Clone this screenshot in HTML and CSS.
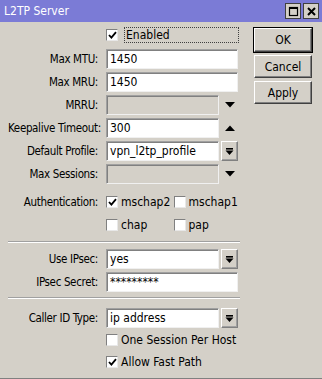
FILE: index.html
```html
<!doctype html>
<html lang="en">
<head>
  <meta charset="UTF-8">
  <title>L2TP Server</title>
  <link rel="stylesheet" href="styles.css">
</head>
<body>
  <div class="window">
    <div class="titlebar">
      <span class="title">L2TP Server</span>
      <div class="tb-buttons">
        <span class="tb-btn"><svg width="11" height="11" viewBox="0 0 11 11"><rect x="1.5" y="1.5" width="8" height="8" fill="none" stroke="#000" stroke-width="1.2"/><line x1="1" y1="2" x2="10" y2="2" stroke="#000" stroke-width="2"/></svg></span>
        <span class="tb-btn"><svg width="11" height="11" viewBox="0 0 11 11"><path d="M2 2 L9 9 M9 2 L2 9" stroke="#000" stroke-width="2"/></svg></span>
      </div>
    </div>

    <div class="content">
      <div class="form">
        <div class="row row-enabled">
          <span class="label"></span>
          <div class="field">
            <span class="check on"><svg width="9" height="9" viewBox="0 0 9 9"><path d="M1 4 L3.4 6.6 L8 1.2" fill="none" stroke="#000" stroke-width="1.8"/></svg></span>
            <span class="focus">Enabled</span>
          </div>
        </div>

        <div class="row">
          <span class="label">Max MTU:</span>
          <div class="field"><span class="input">1450</span></div>
        </div>
        <div class="row">
          <span class="label">Max MRU:</span>
          <div class="field"><span class="input">1450</span></div>
        </div>
        <div class="row">
          <span class="label">MRRU:</span>
          <div class="field">
            <span class="input short disabled"></span>
            <span class="arrow"><svg width="10" height="6" viewBox="0 0 10 6"><polygon points="0,0 10,0 5,5.5" fill="#000"/></svg></span>
          </div>
        </div>
        <div class="row">
          <span class="label">Keepalive Timeout:</span>
          <div class="field">
            <span class="input short">300</span>
            <span class="arrow"><svg width="10" height="6" viewBox="0 0 10 6"><polygon points="0,6 10,6 5,0.5" fill="#000"/></svg></span>
          </div>
        </div>
        <div class="row">
          <span class="label">Default Profile:</span>
          <div class="field">
            <span class="input short">vpn_l2tp_profile</span>
            <span class="drop"><svg width="9" height="9" viewBox="0 0 9 9"><rect x="1" y="1" width="7" height="1.6" fill="#000"/><polygon points="0.5,3.5 8.5,3.5 4.5,8" fill="#000"/></svg></span>
          </div>
        </div>
        <div class="row">
          <span class="label">Max Sessions:</span>
          <div class="field">
            <span class="input short disabled"></span>
            <span class="arrow"><svg width="10" height="6" viewBox="0 0 10 6"><polygon points="0,0 10,0 5,5.5" fill="#000"/></svg></span>
          </div>
        </div>

        <div class="row row-auth">
          <span class="label">Authentication:</span>
          <div class="field checks">
            <span class="opt"><span class="check on"><svg width="9" height="9" viewBox="0 0 9 9"><path d="M1 4 L3.4 6.6 L8 1.2" fill="none" stroke="#000" stroke-width="1.8"/></svg></span>mschap2</span>
            <span class="opt"><span class="check"></span>mschap1</span>
          </div>
        </div>
        <div class="row">
          <span class="label"></span>
          <div class="field checks">
            <span class="opt"><span class="check"></span>chap</span>
            <span class="opt"><span class="check"></span>pap</span>
          </div>
        </div>

        <div class="sep"></div>

        <div class="row">
          <span class="label">Use IPsec:</span>
          <div class="field">
            <span class="input short">yes</span>
            <span class="drop"><svg width="9" height="9" viewBox="0 0 9 9"><rect x="1" y="1" width="7" height="1.6" fill="#000"/><polygon points="0.5,3.5 8.5,3.5 4.5,8" fill="#000"/></svg></span>
          </div>
        </div>
        <div class="row">
          <span class="label">IPsec Secret:</span>
          <div class="field"><span class="input">*********</span></div>
        </div>

        <div class="sep sep-2"></div>

        <div class="row row-caller">
          <span class="label">Caller ID Type:</span>
          <div class="field">
            <span class="input short">ip address</span>
            <span class="drop"><svg width="9" height="9" viewBox="0 0 9 9"><rect x="1" y="1" width="7" height="1.6" fill="#000"/><polygon points="0.5,3.5 8.5,3.5 4.5,8" fill="#000"/></svg></span>
          </div>
        </div>
        <div class="row row-tight">
          <span class="label"></span>
          <div class="field"><span class="opt"><span class="check"></span>One Session Per Host</span></div>
        </div>
        <div class="row row-tight">
          <span class="label"></span>
          <div class="field"><span class="opt"><span class="check on"><svg width="9" height="9" viewBox="0 0 9 9"><path d="M1 4 L3.4 6.6 L8 1.2" fill="none" stroke="#000" stroke-width="1.8"/></svg></span>Allow Fast Path</span></div>
        </div>
      </div>

      <div class="actions">
        <button class="btn default">OK</button>
        <button class="btn">Cancel</button>
        <button class="btn">Apply</button>
      </div>
    </div>
  </div>
</body>
</html>
```

FILE: styles.css
```css
*{margin:0;
  padding:0;
  box-sizing:border-box;}
body{background:#d4d0c8;
     font-family:"DejaVu Sans Condensed","DejaVu Sans","Liberation Sans",sans-serif;
     font-size:11px;
     color:#000;}
.window{width:322px;
        height:379px;
        background:#d4d0c8;
        border-bottom:1px solid #808080;}
.titlebar{height:22px;
          background:#7b7bd6;
          display:flex;
          align-items:center;
          justify-content:space-between;
          padding:0 3px 0 4px;}
.title{color:#fff;
       font-size:12px;}
.tb-buttons{display:flex;
            gap:2px;}
.tb-btn{width:16px;
        height:16px;
        background:#d4d0c8;
        border:1px solid #404040;
        display:flex;
        align-items:center;
        justify-content:center;}

.content{display:flex;
         padding:5px 0 0 8px;}
.form{width:234px;
      display:flex;
      flex-direction:column;
      gap:3px;}
.row{display:flex;
     align-items:center;
     height:20px;
     gap:8px;}
.label{width:90px;
       text-align:right;
       white-space:nowrap;
       font-size:11.5px;
       letter-spacing:-0.35px;}
.field{display:flex;
       align-items:center;
       gap:2px;
       width:133px;}

.row-enabled{height:16px;
             margin-bottom:3px;}
.focus{border:1px dotted #404040;
       width:120px;
       height:16px;
       line-height:14px;
       padding-left:1px;
       margin-left:1px;
       font-size:12px;}

.input{display:block;
       width:132px;
       height:20px;
       line-height:18px;
       padding-left:3px;
       background:#fff;
       border:1px solid;
       border-color:#a0a0a0 #f0f0f0 #f0f0f0 #a0a0a0;
       box-shadow:inset 1px 1px 0 #808080;
       font-size:12px;
       white-space:nowrap;}
.input.short{width:113px;}
.input.disabled{background:#d4d0c8;}
.arrow{width:17px;
       display:flex;
       justify-content:center;}
.drop{width:17px;
      height:20px;
      border:1px solid;
      border-color:#fff #808080 #808080 #fff;
      box-shadow:inset -1px -1px 0 #a0a0a0;
      display:flex;
      align-items:center;
      justify-content:center;}

.check{width:12px;
       height:12px;
       background:#fff;
       border:1px solid;
       border-color:#808080 #e8e8e8 #e8e8e8 #808080;
       display:inline-flex;
       align-items:center;
       justify-content:center;
       margin-right:3px;
       flex-shrink:0;}
.opt{display:flex;
     align-items:center;
     font-size:12px;
     white-space:nowrap;}
.checks .opt{width:68px;}
.row-auth{margin-top:5px;}

.sep{height:2px;
     width:232px;
     border-top:1px solid #a0a0a0;
     border-bottom:1px solid #fff;
     margin:3px 0 3px 0;}
.sep-2{margin:2px 0 6px 0;}
.row-tight{margin-top:-1px;}

.actions{display:flex;
         flex-direction:column;
         gap:3px;
         margin-left:12px;
         margin-top:1px;}
.btn{width:58px;
     height:23px;
     background:#d4d0c8;
     font-family:inherit;
     font-size:12px;
     border:1px solid;
     border-color:#fff #404040 #404040 #fff;
     box-shadow:inset -1px -1px 0 #808080;}
.btn.default{height:24px;
             outline:1px solid #000;
             border-color:#fff #404040 #404040 #fff;}
```
